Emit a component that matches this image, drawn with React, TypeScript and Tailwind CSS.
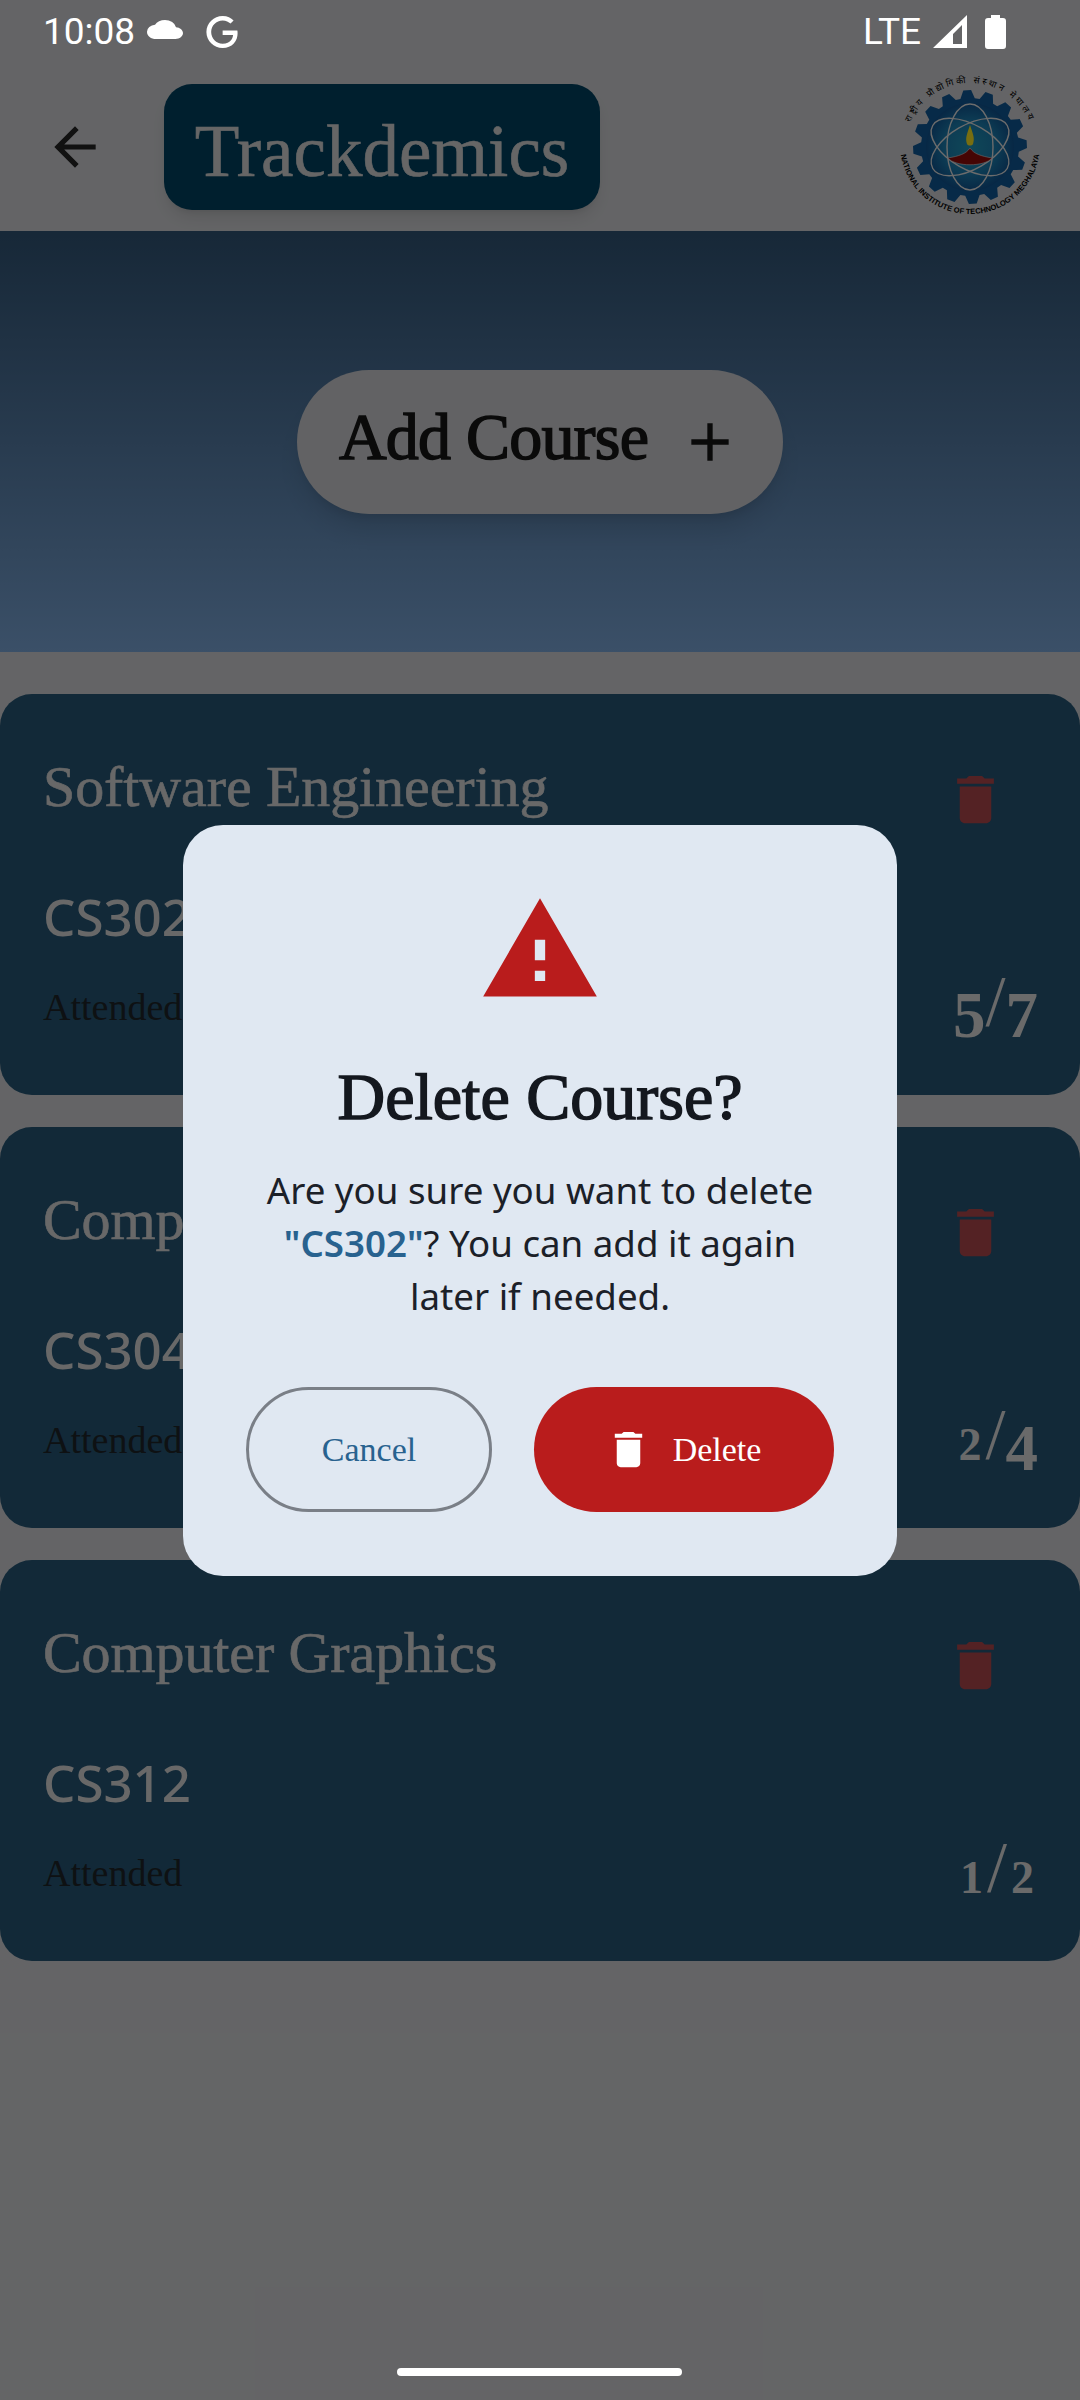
import React from "react";
import { SiGoogle } from "react-icons/si";

const serif = "font-['Liberation_Serif',serif]";
const noto = "font-['Noto_Sans',sans-serif]";

const courses = [
  { name: "Software Engineering", code: "CS302", score: "5/7" },
  { name: "Computer Networks", code: "CS304", score: "2/4" },
  { name: "Computer Graphics", code: "CS312", score: "1/2" },
];

const TrashIcon = ({ size, className }: { size: number; className: string }) => (
  <svg width={size} height={size} viewBox="0 0 24 24" className={className} fill="currentColor">
    <path d="M6 19c0 1.1.9 2 2 2h8c1.1 0 2-.9 2-2V7H6v12zM19 4h-3.5l-1-1h-5l-1 1H5v2h14V4z" />
  </svg>
);

// old style figures: 1 and 2 sit small on the line, 4 5 7 hang below it
const Score = ({ value }: { value: string }) => (
  <span className={`translate-y-[5px] inline-block leading-[50px] font-bold text-[#d4d4d4] ${serif}`}>
    {value.split("").map((ch, i) => {
      if (ch === "/") {
        return <span key={i} className="text-[72px] font-normal">/</span>;
      }
      if (ch === "1" || ch === "2") {
        return <span key={i} className="inline-block text-[46px] mx-[4px] translate-y-[2px]">{ch}</span>;
      }
      return <span key={i} className="inline-block text-[65px] translate-y-[12px]">{ch}</span>;
    })}
  </span>
);

// gear outline for the institute logo
const gearPath = () => {
  const teeth = 16;
  const pts: string[] = [];
  for (let i = 0; i < teeth; i++) {
    const a = (i / teeth) * Math.PI * 2;
    const s = (Math.PI * 2) / teeth;
    const steps: [number, number][] = [
      [49, -0.5],
      [57, -0.3],
      [57, 0.05],
      [49, 0.25],
    ];
    steps.forEach(([r, o]) => {
      const t = a + o * s;
      pts.push(`${(75 + r * Math.cos(t)).toFixed(1)},${(75 + r * Math.sin(t)).toFixed(1)}`);
    });
  }
  return "M" + pts.join("L") + "Z";
};

const Logo = () => (
  <svg width="150" height="150" viewBox="0 0 150 150">
    <defs>
      <radialGradient id="core">
        <stop offset="0%" stopColor="#1f8fb0" />
        <stop offset="60%" stopColor="#1a78a8" />
        <stop offset="100%" stopColor="#0f4f8a" />
      </radialGradient>
      <path id="lower" d="M5 72 A70 70 0 0 0 145 72" />
      <path id="upper" d="M10 76 A65 65 0 0 1 140 76" />
    </defs>
    <path d={gearPath()} fill="#0f5490" />
    <circle cx="75" cy="75" r="44" fill="url(#core)" />
    <g fill="none" stroke="#d8d8d8" strokeWidth="1.4">
      <ellipse cx="75" cy="75" rx="43" ry="22" transform="rotate(30 75 75)" />
      <ellipse cx="75" cy="75" rx="43" ry="22" transform="rotate(-30 75 75)" />
      <ellipse cx="75" cy="75" rx="23" ry="43" />
    </g>
    <path d="M75 53 C78 62 80 66 78 72 C77 74 73 74 72 72 C70 66 72 62 75 53Z" fill="#f0dc20" />
    <path d="M53 86 C64 84 71 82 75 76 C79 82 86 84 97 86 C90 95 60 95 53 86Z" fill="#8a0a08" stroke="#d8d8d8" strokeWidth="0.6" />
    <text className="font-['Liberation_Sans',sans-serif] font-bold" fontSize="7.6" fill="#000">
      <textPath href="#lower" startOffset="50%" textAnchor="middle">
        NATIONAL INSTITUTE OF TECHNOLOGY MEGHALAYA
      </textPath>
    </text>
    <text className="font-['Noto_Sans',sans-serif]" fontSize="9" letterSpacing="2.6" fill="#000">
      <textPath href="#upper" startOffset="50%" textAnchor="middle">
        राष्ट्रीय प्रौद्योगिकी संस्थान मेघालय
      </textPath>
    </text>
  </svg>
);

export default function App() {
  return (
    <div className="relative w-[1080px] h-[2400px] overflow-hidden bg-[#c8c9cc]">
      <div className="h-[63px]" />
      <header className="h-[168px] flex items-center pl-[44px] pr-[35px]">
        <svg width="62" height="62" viewBox="0 0 24 24" fill="#222">
          <path d="M20 11H7.83l5.59-5.59L12 4l-8 8 8 8 1.41-1.41L7.83 13H20v-2z" />
        </svg>
        <div className={`ml-[58px] w-[436px] h-[126px] pt-[10px] rounded-[28px] bg-[#003e5c] shadow-lg flex items-center justify-center text-[73px] text-[#cccccc] [-webkit-text-stroke:0.6px_#cccccc] ${serif}`}>
          Trackdemics
        </div>
        <div className="ml-auto">
          <Logo />
        </div>
      </header>

      <section className="h-[421px] bg-gradient-to-b from-[#2e5070] to-[#76a0d0] flex items-center justify-center">
        <div className={`w-[486px] h-[144px] pl-[42px] rounded-full bg-[#c4c5c8] shadow-xl flex items-center text-[66px] text-[#151515] ${serif}`}>
          <span className="w-[339px] -mt-[10px] tracking-[-0.8px] whitespace-nowrap [-webkit-text-stroke:1.5px_#151515]">Add Course</span>
          <svg width="64" height="64" viewBox="0 0 24 24" fill="#151515">
            <path d="M19 13h-6v6h-2v-6H5v-2h6V5h2v6h6v2z" />
          </svg>
        </div>
      </section>

      <main className="mt-[42px] flex flex-col gap-[32px]">
        {courses.map((c) => (
          <div key={c.code} className="h-[401px] rounded-[32px] bg-[#245270] pl-[43px] pr-[42px] pt-[58px]">
            <div className="h-[70px] flex items-start justify-between">
              <div className={`text-[58px] leading-[70px] tracking-[-0.1px] text-[#d0d0d0] [-webkit-text-stroke:0.6px_#d0d0d0] ${serif}`}>{c.name}</div>
              <TrashIcon size={63} className="mt-[16px] mr-[31px] text-[#a84448]" />
            </div>
            <div className={`mt-[59px] text-[51px] leading-[70px] font-medium text-[#d0d0d0] ${noto}`}>{c.code}</div>
            <div className="mt-[20px] flex items-baseline justify-between">
              <span className={`text-[38px] leading-[50px] text-[#1c2226] ${serif}`}>Attended</span>
              <Score value={c.score} />
            </div>
          </div>
        ))}
      </main>

      {/* dim layer + dialog */}
      <div className="absolute inset-0 bg-black/50 flex items-center justify-center">
        <div className="w-[714px] rounded-[40px] bg-[#e0e8f2] px-[63px] pt-[63px] pb-[64px] flex flex-col items-center">
          <svg width="124" height="124" viewBox="0 0 24 24" fill="#b91c1c">
            <path d="M1 21h22L12 2 1 21zm12-3h-2v-2h2v2zm0-4h-2v-4h2v4z" />
          </svg>
          <h2 className={`mt-[50px] text-[66px] leading-[70px] text-[#14181f] [-webkit-text-stroke:1.5px_#14181f] ${serif}`}>Delete Course?</h2>
          <p className={`mt-[32px] text-[36.7px] leading-[53px] text-center text-[#1b2028] ${noto}`}>
            Are you sure you want to delete <span className="font-semibold text-[#28628f]">"CS302"</span>? You can add it again later if needed.
          </p>
          <div className="mt-[64px] w-full flex gap-[42px]">
            <button className={`w-[246px] h-[125px] rounded-full border-[3px] border-[#7a7f87] text-[34px] text-[#28628f] ${serif}`}>Cancel</button>
            <button className={`flex-1 h-[125px] rounded-full bg-[#b91c1c] flex items-center justify-center gap-[21px] pr-[2px] text-[34px] text-white ${serif}`}>
              <TrashIcon size={47} className="text-white" />
              Delete
            </button>
          </div>
        </div>
      </div>

      {/* system bars sit above the dim layer */}
      <div className="absolute top-0 left-0 right-0 h-[63px] pl-[43px] pr-[74px] flex items-center text-white font-['Roboto',sans-serif] text-[37px]">
        <span>10:08</span>
        <svg width="36" height="19" viewBox="0 4 24 16" preserveAspectRatio="none" fill="#fff" className="ml-[12px] -mt-[4px]">
          <path d="M19.35 10.04A7.49 7.49 0 0 0 12 4C9.11 4 6.6 5.64 5.35 8.04A5.994 5.994 0 0 0 0 14c0 3.31 2.69 6 6 6h13c2.76 0 5-2.24 5-5 0-2.64-2.05-4.78-4.65-4.96z" />
        </svg>
        <SiGoogle size={32} className="ml-[23px]" />
        <span className="ml-auto">LTE</span>
        <svg width="34" height="33" viewBox="0 0 34 33" className="ml-[12px]" fill="#fff">
          <path fillRule="evenodd" d="M0 33 L34 0 V33Z M20 29 H29 V10 L20 19Z" />
        </svg>
        <svg width="21" height="34" viewBox="0 0 21 34" className="ml-[18px]" fill="#fff">
          <path d="M6 0h9v3h3a3 3 0 0 1 3 3v25a3 3 0 0 1-3 3H3a3 3 0 0 1-3-3V6a3 3 0 0 1 3-3h3z" />
        </svg>
      </div>
      <div className="absolute bottom-[24px] left-[397px] w-[285px] h-[8px] rounded-full bg-white" />
    </div>
  );
}
